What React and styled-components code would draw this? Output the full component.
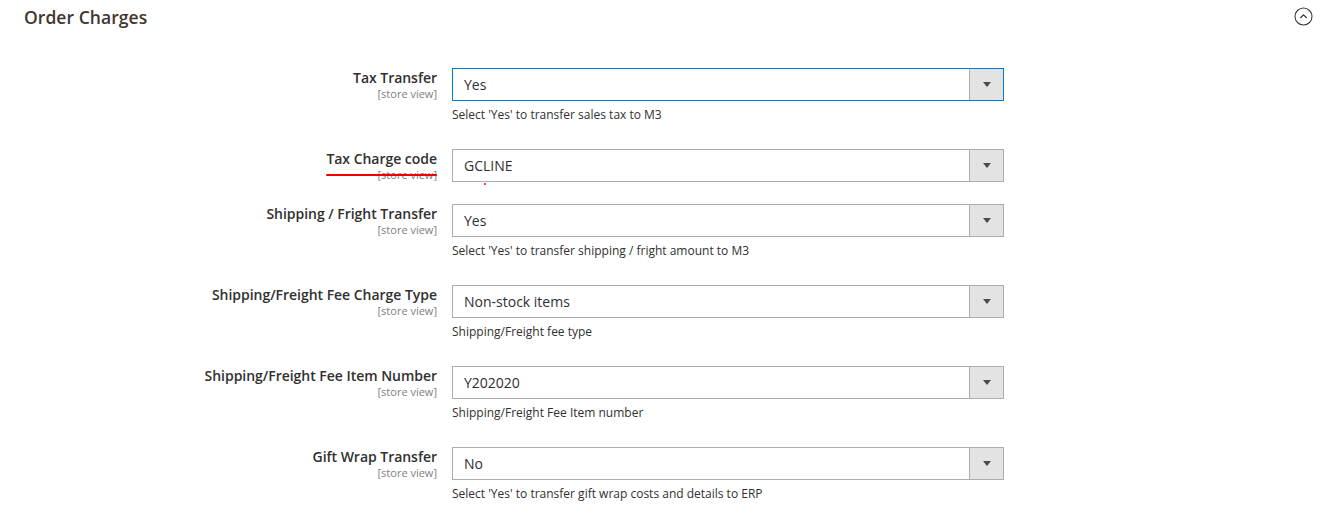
import React from "react";
import styled, { createGlobalStyle } from "styled-components";

const GlobalStyle = createGlobalStyle`
  body {
    margin: 0;
    background: #ffffff;
    font-family: "Open Sans", "Liberation Sans", sans-serif;
    color: #303030;
  }
`;

const Page = styled.div`
  width: 1329px;
  min-height: 520px;
  box-sizing: border-box;
`;

// Collapsible section header
const SectionHeader = styled.div`
  display: flex;
  align-items: center;
  justify-content: space-between;
  height: 33px;
  padding: 0 16px 0 24px;
`;

const SectionTitle = styled.h2`
  margin: 0;
  font-size: 17.5px;
  font-weight: 600;
  color: #41362f;
  letter-spacing: 0.05px;
`;

const Toggle = styled.button`
  border: none;
  background: none;
  padding: 0;
  width: 20px;
  height: 20px;
  display: flex;
  align-items: center;
  justify-content: center;
  cursor: pointer;
`;

const Fields = styled.div`
  display: flex;
  flex-direction: column;
  gap: 22px;
  padding-top: 35px;
`;

const Row = styled.div`
  display: grid;
  grid-template-columns: 437px 552px;
  column-gap: 15px;
  align-items: start;
`;

const Label = styled.div`
  position: relative;
  text-align: right;
  padding-top: 1px;
`;

const LabelText = styled.div`
  font-size: 14px;
  font-weight: 600;
  line-height: 18px;
  letter-spacing: -0.03px;
  color: #303030;
`;

const Scope = styled.div`
  font-size: 11px;
  line-height: 13px;
  color: #808080;
`;

// red annotation stroke drawn over the label
const Annotation = styled.span`
  position: absolute;
  right: 0;
  top: 25px;
  width: 111px;
  height: 2px;
  border-radius: 2px;
  background: #f20000;
`;

const Dot = styled.span`
  position: absolute;
  left: 32px;
  top: 34px;
  width: 2px;
  height: 2px;
  border-radius: 50%;
  background: #f20000;
`;

const Control = styled.div`
  position: relative;
  display: flex;
  flex-direction: column;
`;

const Select = styled.div`
  display: flex;
  height: 33px;
  box-sizing: border-box;
  border: 1px solid ${(p) => (p.focused ? "#007bdb" : "#adadad")};
  background: #ffffff;
`;

const Value = styled.div`
  flex: 1;
  display: flex;
  align-items: center;
  padding-left: 11px;
  font-size: 14px;
  color: #303030;
`;

const Arrow = styled.div`
  width: 33px;
  border-left: 1px solid #adadad;
  background: #e3e3e3;
  display: flex;
  align-items: center;
  justify-content: center;

  &::after {
    content: "";
    border-left: 4px solid transparent;
    border-right: 4px solid transparent;
    border-top: 5px solid #514943;
  }
`;

const Note = styled.div`
  margin-top: 5px;
  padding-bottom: 4px;
  font-size: 12px;
  line-height: 17px;
  color: #303030;
`;

const rows = [
  { label: "Tax Transfer", value: "Yes", note: "Select 'Yes' to transfer sales tax to M3", focused: true },
  { label: "Tax Charge code", value: "GCLINE", marked: true },
  { label: "Shipping / Fright Transfer", value: "Yes", note: "Select 'Yes' to transfer shipping / fright amount to M3" },
  { label: "Shipping/Freight Fee Charge Type", value: "Non-stock items", note: "Shipping/Freight fee type" },
  { label: "Shipping/Freight Fee Item Number", value: "Y202020", note: "Shipping/Freight Fee Item number" },
  { label: "Gift Wrap Transfer", value: "No", note: "Select 'Yes' to transfer gift wrap costs and details to ERP" },
];

const App = () => {
  return (
    <Page>
      <GlobalStyle />
      <SectionHeader>
        <SectionTitle>Order Charges</SectionTitle>
        <Toggle aria-label="Collapse">
          <svg width="19" height="19" viewBox="0 0 19 19" fill="none">
            <circle cx="9.5" cy="9.5" r="8.5" stroke="#41362f" strokeWidth="1.1" />
            <path d="M6.3 11 L9.5 7.8 L12.7 11" stroke="#41362f" strokeWidth="1.2" />
          </svg>
        </Toggle>
      </SectionHeader>

      <Fields>
        {rows.map((r) => (
          <Row key={r.label}>
            <Label>
              <LabelText>{r.label}</LabelText>
              <Scope>[store view]</Scope>
              {r.marked && <Annotation />}
            </Label>
            <Control>
              <Select focused={r.focused}>
                <Value>{r.value}</Value>
                <Arrow />
              </Select>
              {r.note && <Note>{r.note}</Note>}
              {r.marked && <Dot />}
            </Control>
          </Row>
        ))}
      </Fields>
    </Page>
  );
};

export default App;
